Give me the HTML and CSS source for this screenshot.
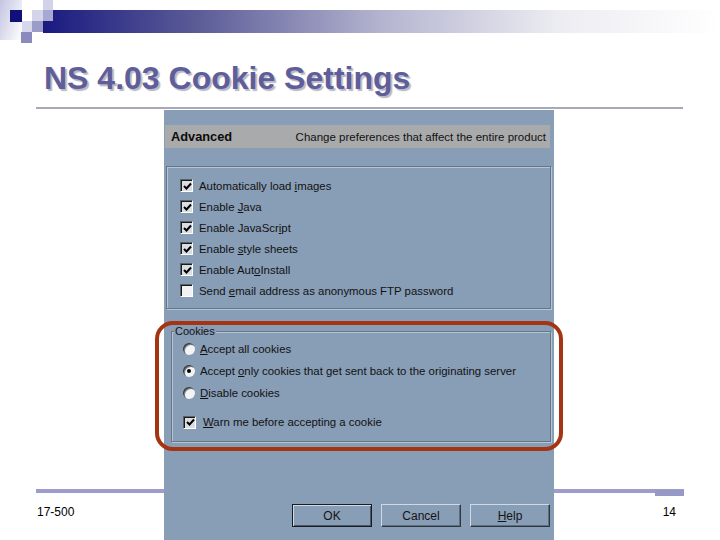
FILE: index.html
```html
<!DOCTYPE html>
<html>
<head>
<meta charset="utf-8">
<link rel="stylesheet" href="styles.css">
</head>
<body>
<div class="slide">
  <header class="head">
    <svg class="deco" width="720" height="45" viewBox="0 0 720 45">
      <defs>
        <linearGradient id="bar" gradientUnits="userSpaceOnUse" x1="43" y1="0" x2="720" y2="0">
          <stop offset="0" stop-color="#1a1a80"/>
          <stop offset="0.23" stop-color="#5c5c98"/>
          <stop offset="0.5" stop-color="#b4b4d0"/>
          <stop offset="0.76" stop-color="#ececf2"/>
          <stop offset="1" stop-color="#ffffff"/>
        </linearGradient>
        <linearGradient id="fade" x1="0" y1="0" x2="1" y2="0.6">
          <stop offset="0" stop-color="#c4c4e2"/>
          <stop offset="1" stop-color="#f6f6fb"/>
        </linearGradient>
      </defs>
      <rect x="43" y="10" width="677" height="23" fill="url(#bar)"/>
      <rect x="0" y="0" width="22" height="40" fill="url(#fade)"/>
      <rect x="10" y="10" width="12" height="12" fill="#10107a"/>
      <rect x="32" y="10" width="11" height="11" fill="#d4d4ea"/>
      <rect x="43" y="0" width="10" height="10" fill="#d2d2e8"/>
      <rect x="43" y="10" width="10" height="11" fill="#a8a8d2"/>
      <rect x="22" y="21" width="10" height="11" fill="#d6d6ec"/>
      <rect x="32" y="21" width="11" height="11" fill="#9c9cc8"/>
      <rect x="21" y="32" width="11" height="11" fill="#8a8abc"/>
    </svg>
    <h1 class="title">NS 4.03 Cookie Settings</h1>
    <div class="rule"></div>
  </header>

  <div class="dialog">
    <div class="band">
      <span class="band-name">Advanced</span>
      <span class="band-desc">Change preferences that affect the entire product</span>
    </div>

    <div class="group">
      <div class="row"><span class="cb on"><svg viewBox="0 0 9 9" width="9" height="9"><path d="M1 4 L3.5 6.5 L8 1.5" fill="none" stroke="#000" stroke-width="2"/></svg></span><span>Automatically load <u>i</u>mages</span></div>
      <div class="row"><span class="cb on"><svg viewBox="0 0 9 9" width="9" height="9"><path d="M1 4 L3.5 6.5 L8 1.5" fill="none" stroke="#000" stroke-width="2"/></svg></span><span>Enable <u>J</u>ava</span></div>
      <div class="row"><span class="cb on"><svg viewBox="0 0 9 9" width="9" height="9"><path d="M1 4 L3.5 6.5 L8 1.5" fill="none" stroke="#000" stroke-width="2"/></svg></span><span>Enable JavaScr<u>i</u>pt</span></div>
      <div class="row"><span class="cb on"><svg viewBox="0 0 9 9" width="9" height="9"><path d="M1 4 L3.5 6.5 L8 1.5" fill="none" stroke="#000" stroke-width="2"/></svg></span><span>Enable <u>s</u>tyle sheets</span></div>
      <div class="row"><span class="cb on"><svg viewBox="0 0 9 9" width="9" height="9"><path d="M1 4 L3.5 6.5 L8 1.5" fill="none" stroke="#000" stroke-width="2"/></svg></span><span>Enable Aut<u>o</u>Install</span></div>
      <div class="row"><span class="cb"></span><span>Send <u>e</u>mail address as anonymous FTP password</span></div>
    </div>

    <fieldset class="cookies">
      <legend>Cookies</legend>
      <div class="row rrow"><span class="rb"></span><span><u>A</u>ccept all cookies</span></div>
      <div class="row rrow"><span class="rb sel"></span><span>Accept <u>o</u>nly cookies that get sent back to the originating server</span></div>
      <div class="row rrow"><span class="rb"></span><span><u>D</u>isable cookies</span></div>
      <div class="row rrow warn"><span class="cb on"><svg viewBox="0 0 9 9" width="9" height="9"><path d="M1 4 L3.5 6.5 L8 1.5" fill="none" stroke="#000" stroke-width="2"/></svg></span><span><u>W</u>arn me before accepting a cookie</span></div>
      <div class="highlight"></div>
    </fieldset>

    <div class="buttons">
      <div class="btn default">OK</div>
      <div class="btn">Cancel</div>
      <div class="btn"><u>H</u>elp</div>
    </div>
  </div>

  <footer class="foot">
    <div class="foot-line"><span class="foot-tab"></span></div>
    <div class="foot-text">
      <span>17-500</span>
      <span>14</span>
    </div>
  </footer>
</div>
</body>
</html>
```

FILE: styles.css
```css
html, body {
  margin: 0;
  padding: 0;
  background: #ffffff;
}

.slide {
  width: 720px;
  height: 540px;
  display: grid;
  grid-template-rows: 110px 379px 51px;
  grid-template-columns: 720px;
  overflow: hidden;
  font-family: "Liberation Sans", Arial, sans-serif;
}

.head {
  grid-row: 1;
  grid-column: 1;
  display: flex;
  flex-direction: column;
}

.deco {
  display: block;
}

.title {
  margin: 17px 0 0 44px;
  font-size: 32px;
  line-height: 32px;
  font-weight: bold;
  color: #5e5e9a;
  text-shadow: 2px 2px 1px #b8b8c6;
  white-space: nowrap;
}

.rule {
  margin: 13px 37px 0 36px;
  height: 2px;
  background: #a8a8b8;
}

/* ---------- dialog ---------- */
.dialog {
  grid-row: 2 / 4;
  grid-column: 1;
  margin-left: 164px;
  width: 390px;
  background: #889db6;
  z-index: 1;
  display: flex;
  flex-direction: column;
  padding-top: 15px;
  font-size: 11.4px;
  color: #121212;
  box-sizing: border-box;
}

.band {
  margin: 0 4px 0 1px;
  height: 23px;
  background: #a9aaab;
  display: flex;
  align-items: center;
  justify-content: space-between;
  padding: 0 4px 0 6px;
}

.band-name {
  font-weight: bold;
  font-size: 12.8px;
  color: #0c0c0c;
}

.band-desc {
  font-size: 11.5px;
}

.group {
  margin: 18px 3px 0 2px;
  height: 143px;
  box-sizing: border-box;
  border: 1px solid #66768a;
  box-shadow: inset 1px 1px 0 #b7c4d2, 1px 1px 0 #b7c4d2;
  padding: 8px 0 0 13px;
}

.row {
  display: flex;
  align-items: center;
  height: 21px;
  gap: 6px;
  white-space: nowrap;
}

.row u {
  text-decoration: underline;
  text-underline-offset: 1px;
}

.cb {
  width: 13px;
  height: 13px;
  box-sizing: border-box;
  background: #f2f2f2;
  border-top: 1px solid #5a6068;
  border-left: 1px solid #5a6068;
  border-right: 1px solid #ffffff;
  border-bottom: 1px solid #ffffff;
  box-shadow: inset 1px 1px 0 #1a1a1a;
  display: flex;
  align-items: center;
  justify-content: center;
  flex: none;
}

.cb.on {
  background: #dadde2;
}

.cb svg {
  display: block;
  margin: 1px 0 0 1px;
}

.cookies {
  position: relative;
  margin: 16px 3px 0 7px;
  padding: 0 0 8px 11px;
  border: 1px solid #66768a;
  box-shadow: inset 1px 1px 0 #b7c4d2, 1px 1px 0 #b7c4d2;
  min-width: 0;
}

.cookies legend {
  padding: 0 1px;
  margin-left: -9px;
  background: #889db6;
  line-height: 13px;
  font-size: 11px;
}

.rrow {
  height: 22px;
  gap: 5px;
}

.rrow.warn {
  margin-top: 7px;
  gap: 7px;
}

.rb {
  width: 12px;
  height: 12px;
  border-radius: 50%;
  background: #f4f4f4;
  box-shadow: inset 1px 1px 0 #3a3a3a, inset 2px 2px 0 #7a8590;
  display: flex;
  align-items: center;
  justify-content: center;
  flex: none;
}

.rb.sel::after {
  content: "";
  width: 4px;
  height: 4px;
  border-radius: 50%;
  background: #000;
}

.highlight {
  position: absolute;
  left: -17px;
  top: -17px;
  right: -13px;
  bottom: -10px;
  border: 4px solid #a43412;
  border-radius: 18px;
  pointer-events: none;
}

.buttons {
  margin-top: 62px;
  display: flex;
  justify-content: flex-end;
  gap: 9px;
  padding-right: 4px;
}

.btn {
  width: 80px;
  height: 23px;
  box-sizing: border-box;
  display: flex;
  align-items: center;
  justify-content: center;
  font-size: 12px;
  color: #141414;
  border-top: 1px solid #cfd8e3;
  border-left: 1px solid #cfd8e3;
  border-right: 1px solid #2e3640;
  border-bottom: 1px solid #2e3640;
  box-shadow: inset -1px -1px 0 #5f6f82;
}

.btn.default {
  border: 1px solid #1a1e24;
  box-shadow: inset 1px 1px 0 #cfd8e3, inset -1px -1px 0 #4a5868;
}

/* ---------- footer ---------- */
.foot {
  grid-row: 3;
  grid-column: 1;
  display: flex;
  flex-direction: column;
}

.foot-line {
  margin: 0 36px;
  height: 4px;
  background: #9d9dcc;
  display: flex;
  justify-content: flex-end;
}

.foot-tab {
  width: 29px;
  height: 6px;
  margin-top: 1px;
  background: #9898c6;
}

.foot-text {
  display: flex;
  justify-content: space-between;
  padding: 12px 44px 0 37px;
  font-size: 12px;
  line-height: 14px;
  color: #000;
}
```
